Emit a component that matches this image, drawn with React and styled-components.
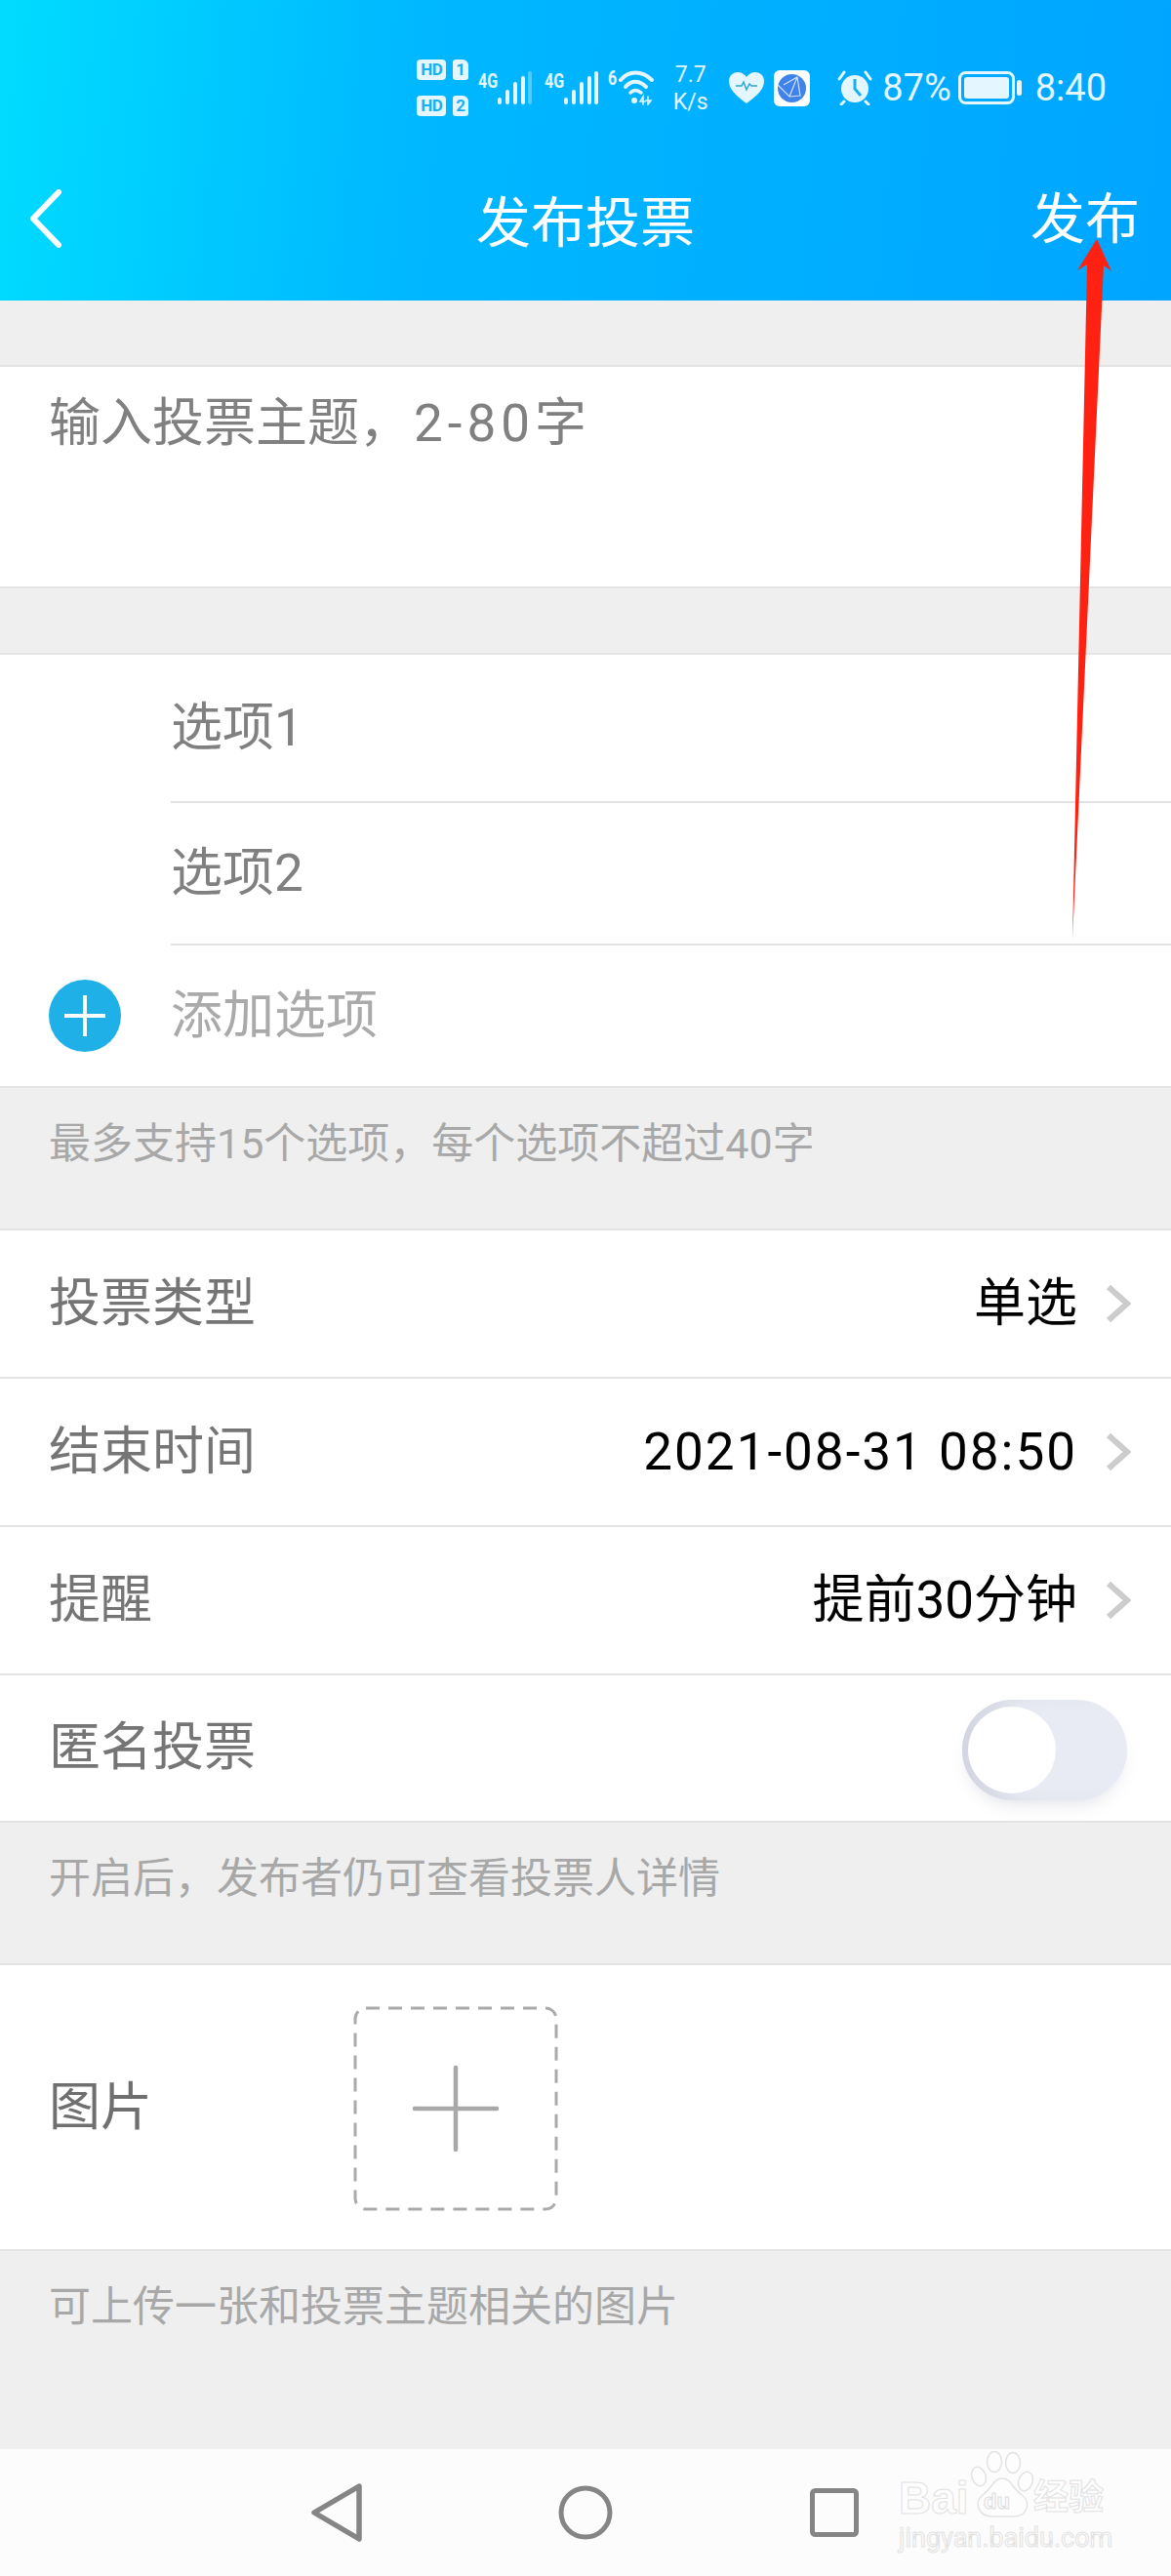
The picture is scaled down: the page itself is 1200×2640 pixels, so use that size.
import React from 'react';
import styled, { createGlobalStyle } from 'styled-components';

const GlobalStyle = createGlobalStyle`
  html, body {
    margin: 0;
    padding: 0;
    background: #efefef;
  }
  * {
    box-sizing: border-box;
  }
`;

const FONT = `Roboto, "Noto Sans CJK SC", sans-serif`;

export default function App() {
  return (
    <Page>
      <GlobalStyle />
      <Header>
        <StatusBar>
          <SimGroup>
            <SimRow>
              <HdBadge>HD</HdBadge>
              <SimTag>1</SimTag>
            </SimRow>
            <SimRow>
              <HdBadge>HD</HdBadge>
              <SimTag>2</SimTag>
            </SimRow>
          </SimGroup>
          <Signal $gap={10} />
          <Signal $gap={13} full />
          <Wifi />
          <Speed>
            <span>7.7</span>
            <span>K/s</span>
          </Speed>
          <HeartIcon />
          <BrowserIcon />
          <AlarmIcon />
          <StatusText $gap={10}>87%</StatusText>
          <BatteryIcon />
          <StatusText $gap={13}>8:40</StatusText>
        </StatusBar>
        <NavBar>
          <BackButton>
            <svg width="34" height="60" viewBox="0 0 34 60" fill="none">
              <path d="M30 3 L4 30 L30 57" stroke="#fff" strokeWidth="6" strokeLinecap="round" strokeLinejoin="round" />
            </svg>
          </BackButton>
          <NavTitle>发布投票</NavTitle>
          <NavAction>发布</NavAction>
        </NavBar>
      </Header>

      <TopicSection>
        <Placeholder>
          输入投票主题，<Digits>2-80</Digits>字
        </Placeholder>
      </TopicSection>

      <OptionsSection>
        <OptionRow>
          <OptionText>选项1</OptionText>
        </OptionRow>
        <OptionRow>
          <OptionText>选项2</OptionText>
        </OptionRow>
        <AddRow>
          <AddButton>
            <svg width="46" height="46" viewBox="0 0 46 46">
              <path d="M23 2 V44 M2 23 H44" stroke="#fff" strokeWidth="4" />
            </svg>
          </AddButton>
          <AddText>添加选项</AddText>
        </AddRow>
      </OptionsSection>

      <Hint>最多支持15个选项，每个选项不超过40字</Hint>

      <ListSection>
        <ListRow>
          <RowLabel>投票类型</RowLabel>
          <RowValue>单选</RowValue>
          <Chevron />
        </ListRow>
        <ListRow>
          <RowLabel>结束时间</RowLabel>
          <RowValue $spaced>2021-08-31 08:50</RowValue>
          <Chevron />
        </ListRow>
        <ListRow>
          <RowLabel>提醒</RowLabel>
          <RowValue>提前30分钟</RowValue>
          <Chevron />
        </ListRow>
        <ListRow $last>
          <RowLabel>匿名投票</RowLabel>
          <Toggle>
            <ToggleKnob />
          </Toggle>
        </ListRow>
      </ListSection>

      <Hint>开启后，发布者仍可查看投票人详情</Hint>

      <ImageSection>
        <ImageLabel>图片</ImageLabel>
        <svg width="210" height="210" viewBox="0 0 210 210" fill="none">
          <rect x="2" y="2" width="206" height="206" rx="11" stroke="#aaa" strokeWidth="3" strokeDasharray="14 9" />
          <path d="M105 63 V147 M63 105 H147" stroke="#a8a8a8" strokeWidth="4.5" strokeLinecap="round" />
        </svg>
      </ImageSection>

      <Hint>可上传一张和投票主题相关的图片</Hint>

      <Filler />

      <SystemNav>
        <svg width="56" height="62" viewBox="0 0 56 62" fill="none">
          <path d="M50 4 L4 31 L50 58 Z" stroke="#858585" strokeWidth="5.5" strokeLinejoin="round" />
        </svg>
        <svg width="56" height="56" viewBox="0 0 56 56" fill="none">
          <circle cx="28" cy="28" r="25" stroke="#858585" strokeWidth="5" />
        </svg>
        <NavSquare width="50" height="50" viewBox="0 0 50 50" fill="none">
          <rect x="2.5" y="2.5" width="45" height="45" rx="3" stroke="#858585" strokeWidth="5" />
        </NavSquare>
      </SystemNav>

      <Watermark>
        <BrandRow>
          <BrandLatin>Bai</BrandLatin>
          <Paw>
            <svg width="64" height="68" viewBox="0 0 64 68" fill="#fdfdfd" stroke="#e2e2e2" strokeWidth="1.5">
              <ellipse cx="8" cy="26" rx="7" ry="10" transform="rotate(-20 8 26)" />
              <ellipse cx="24" cy="11" rx="7.5" ry="10.5" />
              <ellipse cx="43" cy="12" rx="7.5" ry="10.5" />
              <ellipse cx="56" cy="31" rx="7" ry="10" transform="rotate(20 56 31)" />
              <path d="M32 28 C23 28 22 38 12 45 C3 52 7 67 22 67 H44 C58 67 62 52 52 45 C42 38 41 28 32 28 Z" />
            </svg>
            <PawText>du</PawText>
          </Paw>
          <BrandCn>经验</BrandCn>
        </BrandRow>
        <WatermarkUrl>jingyan.baidu.com</WatermarkUrl>
      </Watermark>

      <Arrow width="60" height="730" viewBox="0 0 60 730">
        <polygon points="33,5 48,38 40,32 8,723 23,31 13,37" fill="#ff2112" />
      </Arrow>
    </Page>
  );
}

function Signal({ $gap, full }) {
  return (
    <SignalWrap $gap={$gap}>
      <TinyNet>4G</TinyNet>
      <svg width="35" height="34" viewBox="0 0 35 34">
        <rect x="0" y="27" width="4" height="7" rx="2" fill="#e4f6ff" />
        <rect x="8" y="19" width="4" height="15" rx="2" fill="#e4f6ff" />
        <rect x="16" y="11" width="4" height="23" rx="2" fill="#e4f6ff" />
        <rect x="24" y="5" width="4" height="29" rx="2" fill="#e4f6ff" />
        <rect x="31" y="0" width="4" height="34" rx="2" fill="#e4f6ff" opacity={full ? 1 : 0.35} />
      </svg>
    </SignalWrap>
  );
}

function Wifi() {
  return (
    <WifiWrap>
      <TinyNet>6</TinyNet>
      <svg width="36" height="36" viewBox="0 0 36 36" fill="none" stroke="#e4f6ff" strokeLinecap="round">
        <path d="M2 10 C10 0 24 0 34 10" strokeWidth="4" />
        <path d="M7 17 C13 10 21 10 28 17" strokeWidth="4" />
        <path d="M12 23 C15 20 19 20 23 23" strokeWidth="3.5" />
        <circle cx="16" cy="31" r="3" fill="#e4f6ff" stroke="none" />
        <path d="M25 35 V27 L22 32 H27 M30 27 V35 L33 31 H28" strokeWidth="1.5" />
      </svg>
    </WifiWrap>
  );
}

function HeartIcon() {
  return (
    <IconSlot $gap={20}>
      <svg width="36" height="32" viewBox="0 0 36 32">
        <path d="M18 32 C6 23 0 17 0 9 C0 3 5 0 9 0 C13 0 16 2 18 5 C20 2 23 0 27 0 C31 0 36 3 36 9 C36 17 30 23 18 32 Z" fill="#e4f6ff" />
        <path d="M7 14 H13 L15 10 L18 18 L21 12 L23 14 H29" fill="none" stroke="#2aa6d6" strokeWidth="1.5" />
      </svg>
    </IconSlot>
  );
}

function BrowserIcon() {
  return (
    <IconSlot $gap={10}>
      <svg width="37" height="37" viewBox="0 0 37 37">
        <rect width="37" height="37" rx="6" fill="#fff" />
        <circle cx="18.5" cy="18.5" r="14.5" fill="#3f83ea" />
        <path d="M4 15 L16 27 L27 26 L24 7 L10 15 M16 27 L24 7" fill="none" stroke="#cfe2ff" strokeWidth="1.2" />
      </svg>
    </IconSlot>
  );
}

function AlarmIcon() {
  return (
    <IconSlot $gap={28}>
      <svg width="36" height="36" viewBox="0 0 36 36" fill="none">
        <circle cx="18" cy="19" r="14" fill="#e4f6ff" />
        <path d="M18 9 V19 L24 26" stroke="#19b0f0" strokeWidth="3" />
        <path d="M2 9 L7 2 M34 9 L29 2 M7 32 L4 35 M29 32 L32 35" stroke="#e4f6ff" strokeWidth="3" strokeLinecap="round" />
      </svg>
    </IconSlot>
  );
}

function BatteryIcon() {
  return (
    <IconSlot $gap={7}>
      <svg width="66" height="34" viewBox="0 0 66 34" fill="none">
        <rect x="1.5" y="1.5" width="55" height="31" rx="6" stroke="#e4f6ff" strokeWidth="3" />
        <rect x="6" y="6" width="46" height="22" rx="3" fill="#e4f6ff" />
        <rect x="60" y="9" width="5" height="16" rx="2.5" fill="#e4f6ff" />
      </svg>
    </IconSlot>
  );
}

function Chevron() {
  return (
    <ChevronWrap>
      <svg width="26" height="40" viewBox="0 0 26 40" fill="none">
        <path d="M3 3 L22 20 L3 37" stroke="#cccccc" strokeWidth="6" />
      </svg>
    </ChevronWrap>
  );
}

/* Styled components
   ========================================================================== */
const Page = styled.div`
  position: relative;
  display: flex;
  flex-direction: column;
  width: 1200px;
  height: 2640px;
  overflow: hidden;
  background: #efefef;
  font-family: ${FONT};
`;

const Header = styled.header`
  height: 308px;
  margin-bottom: 66px;
  background: linear-gradient(95deg, #00dcff 0%, #00b8ff 35%, #00a5ff 100%);
  color: #fff;
`;

const StatusBar = styled.div`
  display: flex;
  align-items: center;
  justify-content: flex-end;
  height: 180px;
  padding: 0 66px 0 0;
  color: #e4f6ff;
`;

const SimGroup = styled.div`
  display: flex;
  flex-direction: column;
  gap: 16px;
`;

const SimRow = styled.div`
  display: flex;
  gap: 7px;
`;

const HdBadge = styled.span`
  display: flex;
  align-items: center;
  justify-content: center;
  width: 30px;
  height: 21px;
  border-radius: 4px;
  background: #e4f6ff;
  color: #19b0f0;
  font: 700 17px/1 ${FONT};
  letter-spacing: -0.5px;
`;

const SimTag = styled.span`
  display: flex;
  align-items: center;
  justify-content: center;
  width: 16px;
  height: 21px;
  border-radius: 3px 6px 3px 3px;
  background: #e4f6ff;
  color: #19b0f0;
  font: 700 17px/1 ${FONT};
`;

const SignalWrap = styled.div`
  display: flex;
  align-items: flex-end;
  margin-left: ${({ $gap }) => $gap}px;
`;

const TinyNet = styled.span`
  align-self: flex-start;
  width: 20px;
  font: 700 20px/1 ${FONT};
  transform: scaleX(0.8);
  transform-origin: left;
`;

const WifiWrap = styled.div`
  display: flex;
  width: 47px;
  margin-left: 10px;

  ${TinyNet} {
    width: 11px;
    margin-top: -2px;
  }
`;

const Speed = styled.div`
  display: flex;
  flex-direction: column;
  align-items: center;
  gap: 7px;
  width: 39px;
  margin-left: 18px;
  font: 400 23px/21px ${FONT};
`;

const IconSlot = styled.div`
  display: flex;
  margin-left: ${({ $gap }) => $gap}px;
`;

const StatusText = styled.span`
  margin-left: ${({ $gap }) => $gap}px;
  font: 400 38px/1 ${FONT};
`;

const NavBar = styled.div`
  position: relative;
  display: flex;
  align-items: center;
  justify-content: center;
  height: 96px;
`;

const BackButton = styled.div`
  position: absolute;
  left: 30px;
  top: 14px;
  display: flex;
`;

const NavTitle = styled.h1`
  margin: 0;
  padding-top: 3px;
  font-size: 56px;
  font-weight: 400;
  line-height: 93px;
`;

const NavAction = styled.span`
  position: absolute;
  right: 32px;
  top: -3px;
  font-size: 56px;
  line-height: 96px;
`;

const TopicSection = styled.section`
  height: 229px;
  margin-bottom: 66px;
  padding: 28px 50px 0;
  background: #fff;
  border-top: 2px solid #e3e3e3;
  border-bottom: 2px solid #e3e3e3;
`;

const Placeholder = styled.div`
  font-size: 53px;
  line-height: 60px;
  color: #808080;
`;

const Digits = styled.span`
  margin-left: 3px;
  letter-spacing: 5px;
`;

const OptionsSection = styled.section`
  height: 446px;
  background: #fff;
  border-top: 2px solid #e3e3e3;
  border-bottom: 2px solid #e3e3e3;
`;

const OptionRow = styled.div`
  display: flex;
  align-items: center;
  height: 146px;
  margin-left: 175px;
  border-bottom: 2px solid #e3e3e3;

  &:first-child {
    height: 152px;
  }
`;

const OptionText = styled.span`
  font-size: 53px;
  line-height: 60px;
  color: #808080;
`;

const AddRow = styled.div`
  display: flex;
  align-items: center;
  height: 144px;
  padding-left: 50px;
`;

const AddButton = styled.div`
  display: flex;
  align-items: center;
  justify-content: center;
  width: 74px;
  height: 74px;
  margin-right: 51px;
  border-radius: 50%;
  background: #1fb0e8;
`;

const AddText = styled.span`
  font-size: 53px;
  line-height: 60px;
  color: #aaaaaa;
`;

const Hint = styled.p`
  height: 144px;
  margin: 0;
  padding: 27px 50px 0;
  font-size: 43px;
  line-height: 60px;
  color: #a8a8a8;
`;

const ListSection = styled.section`
  background: #fff;
  border-top: 2px solid #e3e3e3;
  border-bottom: 2px solid #e3e3e3;
`;

const ListRow = styled.div`
  display: flex;
  align-items: center;
  height: ${({ $last }) => ($last ? '149px' : '152px')};
  padding: 0 41px 0 50px;
  border-bottom: ${({ $last }) => ($last ? 'none' : '2px solid #e3e3e3')};
`;

const RowLabel = styled.span`
  flex: 1;
  padding-bottom: 1px;
  font-size: 53px;
  line-height: 60px;
  color: #757575;
`;

const RowValue = styled.span`
  padding-bottom: 1px;
  font-size: 53px;
  line-height: 60px;
  letter-spacing: ${({ $spaced }) => ($spaced ? '2px' : '0')};
  color: #000;
`;

const ChevronWrap = styled.span`
  display: flex;
  margin-left: 29px;
`;

const Toggle = styled.div`
  position: relative;
  width: 169px;
  height: 103px;
  margin: 3px 4px 0 0;
  border-radius: 52px;
  background: #e8ebf3;
  box-shadow: inset 34px 0 26px -14px #d2d5e0, 0 10px 18px -8px rgba(120, 125, 150, 0.25);
`;

const ToggleKnob = styled.span`
  position: absolute;
  left: 6px;
  top: 7px;
  width: 90px;
  height: 89px;
  border-radius: 50%;
  background: #fff;
`;

const ImageSection = styled.section`
  display: flex;
  align-items: center;
  height: 295px;
  padding-left: 50px;
  background: #fff;
  border-top: 2px solid #e3e3e3;
  border-bottom: 2px solid #e3e3e3;

  svg {
    margin: 2px 0 0 206px;
  }
`;

const ImageLabel = styled.span`
  font-size: 53px;
  line-height: 60px;
  color: #6f6f6f;
`;

const Filler = styled.div`
  flex: 1;
`;

const SystemNav = styled.nav`
  display: flex;
  align-items: center;
  height: 130px;
  padding: 0 0 0 318px;
  gap: 198px;
  background: #fcfcfc;
`;

const NavSquare = styled.svg`
  margin-left: 4px;
`;

const Watermark = styled.div`
  position: absolute;
  left: 921px;
  top: 2512px;
  display: flex;
  flex-direction: column;
  width: 216px;
  color: #fdfdfd;
`;

const BrandRow = styled.div`
  display: flex;
  align-items: flex-end;
  height: 68px;
`;

const BrandLatin = styled.span`
  width: 74px;
  font: 700 46px/40px "Liberation Sans", sans-serif;
  -webkit-text-stroke: 1px #e2e2e2;
`;

const Paw = styled.span`
  position: relative;
  display: flex;
  width: 64px;
  height: 68px;
`;

const PawText = styled.span`
  position: absolute;
  left: 13px;
  bottom: 5px;
  font: 700 22px/22px "Liberation Sans", sans-serif;
  -webkit-text-stroke: 1px #dcdcdc;
`;

const BrandCn = styled.span`
  font-size: 36px;
  font-weight: 700;
  line-height: 40px;
  -webkit-text-stroke: 1px #e2e2e2;
`;

const WatermarkUrl = styled.div`
  margin-top: 6px;
  font: 400 27px/30px Roboto, sans-serif;
  -webkit-text-stroke: 1px #e2e2e2;
  white-space: nowrap;
`;

const Arrow = styled.svg`
  position: absolute;
  left: 1091px;
  top: 240px;
`;
